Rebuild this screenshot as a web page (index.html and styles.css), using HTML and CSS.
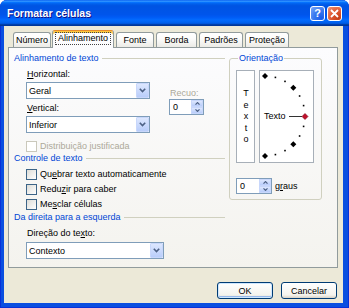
FILE: index.html
```html
<!DOCTYPE html>
<html lang="pt">
<head>
  <meta charset="UTF-8">
  <title>Formatar células</title>
  <link rel="stylesheet" href="styles.css">
</head>
<body>
<div class="window">
  <!-- barra de título -->
  <div class="titlebar">
    <span class="title">Formatar células</span>
    <span class="title-buttons">
      <span class="tbtn help">?</span>
      <span class="tbtn close">
        <svg width="9" height="9" viewBox="0 0 9 9"><path d="M1 1 L8 8 M8 1 L1 8" stroke="#fff" stroke-width="1.8"/></svg>
      </span>
    </span>
  </div>

  <div class="client">
    <!-- abas -->
    <div class="tabs">
      <span class="tab">Número</span>
      <span class="tab active"><span class="focus">Alinhamento</span></span>
      <span class="tab">Fonte</span>
      <span class="tab">Borda</span>
      <span class="tab">Padrões</span>
      <span class="tab">Proteção</span>
    </div>

    <div class="panel">
      <div class="col-left">
        <div class="group-title">Alinhamento de texto</div>
        <div class="align-grid">
          <div class="fields">
            <div class="label"><u>H</u>orizontal:</div>
            <div class="select w-main"><span>Geral</span><span class="drop"><svg width="7" height="5" viewBox="0 0 7 5"><path d="M0.8 0.8 L3.5 3.6 L6.2 0.8" fill="none" stroke="#4d6185" stroke-width="1.6"/></svg></span></div>
            <div class="label gap"><u>V</u>ertical:</div>
            <div class="select w-main"><span>Inferior</span><span class="drop"><svg width="7" height="5" viewBox="0 0 7 5"><path d="M0.8 0.8 L3.5 3.6 L6.2 0.8" fill="none" stroke="#4d6185" stroke-width="1.6"/></svg></span></div>
          </div>
          <div class="indent">
            <div class="label disabled">Recuo:</div>
            <div class="spin w-indent">
              <span>0</span>
              <span class="spin-btns">
                <span class="spin-btn"><svg width="5" height="3" viewBox="0 0 5 3"><path d="M0.5 2.6 L2.5 0.6 L4.5 2.6" fill="none" stroke="#4d6185" stroke-width="1.2"/></svg></span>
                <span class="spin-btn"><svg width="5" height="3" viewBox="0 0 5 3"><path d="M0.5 0.4 L2.5 2.4 L4.5 0.4" fill="none" stroke="#4d6185" stroke-width="1.2"/></svg></span>
              </span>
            </div>
          </div>
        </div>
        <div class="check disabled first"><span class="box"></span><span>Distribuição justificada</span></div>

        <div class="group-title">Controle de texto</div>
        <div class="check c1"><span class="box"></span><span>Qu<u>e</u>brar texto automaticamente</span></div>
        <div class="check"><span class="box"></span><span>Redu<u>z</u>ir para caber</span></div>
        <div class="check"><span class="box"></span><span>Me<u>s</u>clar células</span></div>

        <div class="group-title rtl">Da direita para a esquerda</div>
        <div class="label dir">Direção do te<u>x</u>to:</div>
        <div class="select w-dir"><span>Contexto</span><span class="drop"><svg width="7" height="5" viewBox="0 0 7 5"><path d="M0.8 0.8 L3.5 3.6 L6.2 0.8" fill="none" stroke="#4d6185" stroke-width="1.6"/></svg></span></div>
      </div>

      <!-- orientação -->
      <fieldset class="orient">
        <legend>Orientação</legend>
        <div class="orient-view">
          <div class="vbox">Texto</div>
          <div class="dial">
            <svg width="53" height="91" viewBox="0 0 53 91">
              <g fill="#000">
                <rect x="14.6" y="5.6" width="1.6" height="1.6"/>
                <rect x="24.2" y="9.6" width="1.6" height="1.6"/>
                <rect x="38.8" y="24.2" width="1.6" height="1.6"/>
                <rect x="42.8" y="33.8" width="1.6" height="1.6"/>
                <rect x="42.8" y="54.6" width="1.6" height="1.6"/>
                <rect x="38.8" y="64.2" width="1.6" height="1.6"/>
                <rect x="24.2" y="78.8" width="1.6" height="1.6"/>
                <rect x="14.6" y="82.8" width="1.6" height="1.6"/>
                <polygon points="5,2 8,5 5,8 2,5"/>
                <polygon points="33.3,13.7 36.3,16.7 33.3,19.7 30.3,16.7"/>
                <polygon points="33.3,70.3 36.3,73.3 33.3,76.3 30.3,73.3"/>
                <polygon points="5,82 8,85 5,88 2,85"/>
              </g>
              <text x="4" y="48.2" font-family="Liberation Sans, Arial, sans-serif" font-size="9">Texto</text>
              <line x1="29" y1="45.5" x2="42" y2="45.5" stroke="#333" stroke-width="1"/>
              <polygon points="45,42.5 48,45.5 45,48.5 42,45.5" fill="#c0102a" stroke="#7a0018" stroke-width="0.6"/>
            </svg>
          </div>
        </div>
        <div class="deg-row">
          <div class="spin w-deg">
            <span>0</span>
            <span class="spin-btns">
              <span class="spin-btn"><svg width="5" height="3" viewBox="0 0 5 3"><path d="M0.5 2.6 L2.5 0.6 L4.5 2.6" fill="none" stroke="#4d6185" stroke-width="1.2"/></svg></span>
              <span class="spin-btn"><svg width="5" height="3" viewBox="0 0 5 3"><path d="M0.5 0.4 L2.5 2.4 L4.5 0.4" fill="none" stroke="#4d6185" stroke-width="1.2"/></svg></span>
            </span>
          </div>
          <span>g<u>r</u>aus</span>
        </div>
      </fieldset>
    </div>

    <!-- botões -->
    <div class="buttons">
      <button type="button" class="default">OK</button>
      <button type="button">Cancelar</button>
    </div>
  </div>
</div>
</body>
</html>
```

FILE: styles.css
```css
/* Janela estilo Windows XP */
* {
  box-sizing: border-box;
}

body {
  margin: 0;
  font-family: "Liberation Sans", Arial, sans-serif;
  font-size: 9px;
  color: #000;
  background: #fff;
}

.window {
  width: 349px;
  height: 308px;
  display: flex;
  flex-direction: column;
  background: #0a4fe0;
  border-radius: 7px 7px 0 0;
  overflow: hidden;
  box-shadow: inset 1px 0 #0831d9, inset -1px 0 #0831d9, inset 0 -1px #0831d9;
}

/* Barra de título */
.titlebar {
  height: 26px;
  flex: none;
  display: flex;
  align-items: center;
  justify-content: space-between;
  padding: 0 7px 0 7px;
  background: linear-gradient(to bottom, #0058ee 0%, #3593ff 4%, #288eff 6%, #127dff 8%, #036ffc 10%, #0262ee 14%, #0057e5 20%, #0054e3 24%, #0055eb 56%, #005bf5 66%, #026afe 76%, #0062ef 86%, #0052d6 92%, #0040ab 94%, #003092 100%);
}

.title {
  color: #fff;
  font-weight: bold;
  font-size: 10.5px;
  text-shadow: 1px 1px #0f1089;
  padding-bottom: 1px;
}

.title-buttons {
  display: flex;
  gap: 2px;
}

.tbtn {
  width: 15px;
  height: 15px;
  border: 1px solid #fff;
  border-radius: 3px;
  display: flex;
  align-items: center;
  justify-content: center;
  color: #fff;
  font-weight: bold;
  font-size: 11px;
}

.help {
  background: radial-gradient(circle at 80% 85%, #1a5ce8, #3a7af0 50%, #7ea8f8);
}

.close {
  background: radial-gradient(circle at 80% 85%, #c43d16, #e05a33 50%, #f0977a);
}

/* Área cliente */
.client {
  flex: 1;
  margin: 0 6px 5px 4px;
  padding: 4px 5px 0 4px;
  background: #ece9d8;
}

/* Abas */
.tabs {
  height: 17px;
  display: flex;
  align-items: flex-end;
  gap: 2px;
  padding-left: 5px;
}

.tab {
  height: 15px;
  border: 1px solid #919b9c;
  border-bottom: none;
  border-radius: 3px 3px 0 0;
  background: linear-gradient(#fff, #fcfcfb 40%, #ecebe6);
  display: flex;
  align-items: center;
  justify-content: center;
}

.tab:nth-child(1) { width: 38px; }
.tab:nth-child(2) { width: 62px; margin-left: -1px; }
.tab:nth-child(3) { width: 38px; }
.tab:nth-child(4) { width: 41px; }
.tab:nth-child(5) { width: 44px; }
.tab:nth-child(6) { width: 44px; }

.tab.active {
  position: relative;
  z-index: 1;
  height: 18px;
  margin-bottom: -1px;
  padding-bottom: 2px;
  background: #fcfcfe;
  border-top: 1px solid #e68b2c;
  box-shadow: inset 0 2px #ffc73c;
}

.focus {
  border: 1px dotted #444;
  padding: 0 2px;
  line-height: 11px;
}

/* Painel da aba */
.panel {
  height: 221px;
  border: 1px solid #919b9c;
  background: linear-gradient(#fcfcfe, #f4f3ee);
  padding: 4px 0 0 5px;
  display: grid;
  grid-template-columns: 211px 93px;
  column-gap: 4px;
  align-items: start;
}

.group-title {
  display: flex;
  align-items: center;
  line-height: 12px;
  color: #0046d5;
}

.group-title::after {
  content: "";
  flex: 1;
  height: 1px;
  margin-left: 3px;
  background: #d0d0bf;
}

.group-title.rtl {
  margin-top: 1px;
}

.label {
  line-height: 12px;
  margin-left: 1px;
}

.label.gap {
  margin-top: 3px;
}

.disabled {
  color: #aca899;
}

.align-grid {
  display: grid;
  grid-template-columns: 124px 35px;
  column-gap: 19px;
  margin: 4px 0 0 12px;
}

.fields .select {
  margin-top: 2px;
}

.indent {
  padding-top: 19px;
}

/* Caixa de listagem */
.select {
  height: 17px;
  border: 1px solid #7f9db9;
  background: #fff;
  display: flex;
  align-items: center;
  padding-left: 2px;
}

.w-main { width: 124px; }
.w-dir { width: 138px; margin: 3px 0 0 12px; }

.drop {
  margin-left: auto;
  width: 13px;
  height: 100%;
  display: flex;
  align-items: center;
  justify-content: center;
  background: linear-gradient(#dde7fe, #b9cdfa);
  border: 1px solid #c8d7fb;
  border-radius: 1px;
}

/* Caixa de rotação */
.spin {
  height: 16px;
  border: 1px solid #7f9db9;
  background: #fff;
  display: flex;
  align-items: center;
  padding-left: 3px;
}

.w-indent { width: 35px; }
.w-deg { width: 36px; }

.spin-btns {
  margin-left: auto;
  width: 12px;
  height: 100%;
  display: flex;
  flex-direction: column;
}

.spin-btn {
  flex: 1;
  display: flex;
  align-items: center;
  justify-content: center;
  background: linear-gradient(#dde7fe, #b9cdfa);
  border: 1px solid #c8d7fb;
}

/* Caixas de seleção */
.check {
  height: 12px;
  display: flex;
  align-items: center;
  gap: 3px;
  margin: 3px 0 0 12px;
}

.check.first {
  margin: 7px 0 0 12px;
}

.check.c1 {
  margin-top: 4px;
}

.box {
  width: 11px;
  height: 11px;
  border: 1px solid #3c6487;
  background: linear-gradient(135deg, #dcdcd7, #fff);
}

.check.disabled .box {
  border-color: #cac8bb;
  background: #fff;
}

.label.dir {
  margin: 4px 0 0 13px;
}

/* Orientação */
.orient {
  margin: 0;
  padding: 6px 0 5px 6px;
  border: 1px solid #d0d0bf;
  border-radius: 3px;
  min-width: 0;
}

.orient legend {
  padding: 0 1px;
  margin-left: 2px;
  line-height: 12px;
  color: #0046d5;
}

.orient-view {
  display: flex;
  gap: 4px;
}

.vbox {
  width: 19px;
  height: 93px;
  border: 1px solid #a7afb8;
  background: #fff;
  writing-mode: vertical-rl;
  text-orientation: upright;
  letter-spacing: 1.6px;
  display: flex;
  align-items: center;
  justify-content: center;
  line-height: 17px;
}

.dial {
  width: 55px;
  height: 93px;
  border: 1px solid #a7afb8;
  background: #fff;
}

.dial svg {
  display: block;
}

.deg-row {
  margin-top: 15px;
  display: flex;
  align-items: center;
  gap: 3px;
}

/* Botões */
.buttons {
  display: flex;
  justify-content: flex-end;
  gap: 8px;
  margin-top: 14px;
  padding-right: 1px;
}

button {
  width: 56px;
  height: 17px;
  padding: 0;
  font-family: inherit;
  font-size: 9px;
  color: #000;
  border: 1px solid #003c74;
  border-radius: 3px;
  background: linear-gradient(#fff, #f4f3ee 80%, #d8d2c6);
}

button.default {
  box-shadow: inset 0 0 0 1px #cee7ff, inset 0 -1px 0 1px #98b8ea;
}
```
